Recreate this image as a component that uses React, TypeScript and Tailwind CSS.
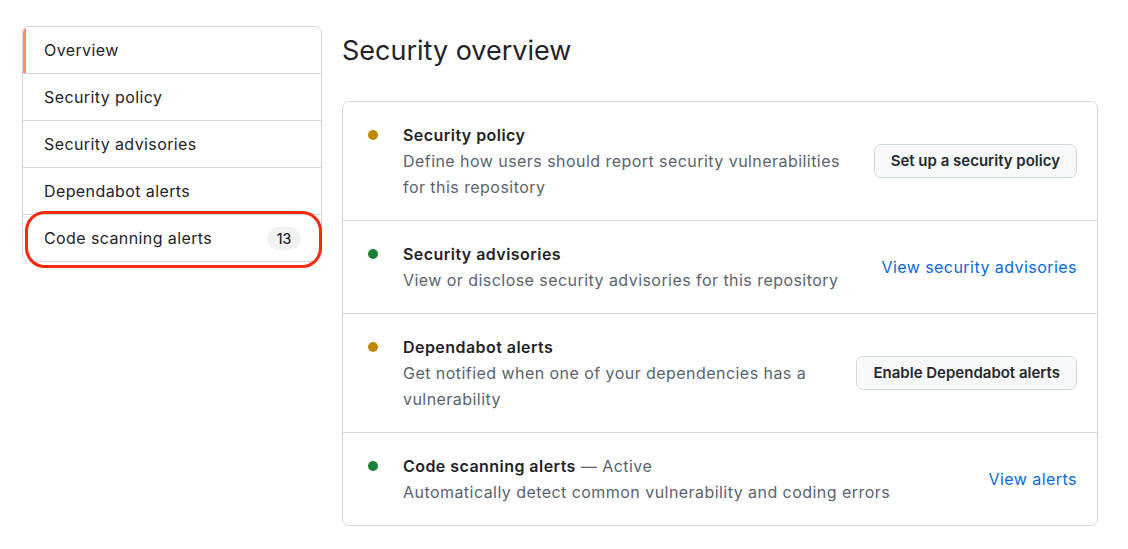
import React from 'react';

const navItems = [
  { label: 'Overview', active: true },
  { label: 'Security policy' },
  { label: 'Security advisories' },
  { label: 'Dependabot alerts' },
  { label: 'Code scanning alerts', count: 13 },
];

type Row = {
  title: string;
  suffix?: string;
  description: string;
  status: 'warn' | 'ok';
  action: { kind: 'button' | 'link'; label: string };
};

const rows: Row[] = [
  {
    title: 'Security policy',
    description: 'Define how users should report security vulnerabilities for this repository',
    status: 'warn',
    action: { kind: 'button', label: 'Set up a security policy' },
  },
  {
    title: 'Security advisories',
    description: 'View or disclose security advisories for this repository',
    status: 'ok',
    action: { kind: 'link', label: 'View security advisories' },
  },
  {
    title: 'Dependabot alerts',
    description: 'Get notified when one of your dependencies has a vulnerability',
    status: 'warn',
    action: { kind: 'button', label: 'Enable Dependabot alerts' },
  },
  {
    title: 'Code scanning alerts',
    suffix: ' — Active',
    description: 'Automatically detect common vulnerability and coding errors',
    status: 'ok',
    action: { kind: 'link', label: 'View alerts' },
  },
];

function SideNav() {
  return (
    <div className="relative w-[300px] shrink-0">
      <nav className="border border-[#d1d9e0] rounded-[7px] overflow-hidden bg-white">
        {navItems.map((item, i) => (
          <div
            key={item.label}
            className={`relative flex items-center justify-between pl-[21px] pr-[20px] text-[16px] tracking-[0.4px] text-[#1f2328] ${
              i > 0 ? 'h-[47px] border-t border-[#d1d9e0]' : 'h-[46px]'
            }`}
          >
            {item.active && <span className="absolute left-0 top-0 bottom-0 w-[3px] bg-[#fd8c73]" />}
            <span>{item.label}</span>
            {item.count !== undefined && (
              <span className="flex items-center justify-center h-[23px] min-w-[34px] px-[8px] rounded-full bg-[#eff1f3] text-[14px] tracking-normal font-medium text-[#1f2328]">
                {item.count}
              </span>
            )}
          </div>
        ))}
      </nav>
      {/* annotation ring */}
      <div className="absolute left-[3px] top-[185px] w-[297px] h-[57px] border-[3.5px] border-[#f5290c] rounded-[20px] pointer-events-none" />
    </div>
  );
}

function StatusRow({ row, first }: { row: Row; first: boolean }) {
  return (
    <div className={`flex items-center py-5 pl-[25px] pr-[20px] ${first ? '' : 'border-t border-[#d1d9e0]'}`}>
      <div className="flex items-start flex-1 min-w-0 pr-4">
        <span
          className={`mt-[8px] w-[10px] h-[10px] rounded-full shrink-0 ${
            row.status === 'warn' ? 'bg-[#bf8700]' : 'bg-[#1a7f37]'
          }`}
        />
        <div className="ml-[25px] leading-[26px] text-[16px] tracking-[0.45px]">
          <div className="text-[#1f2328]">
            <span className="font-semibold">{row.title}</span>
            {row.suffix && <span className="text-[#59636e]">{row.suffix}</span>}
          </div>
          <div className="text-[#59636e]">{row.description}</div>
        </div>
      </div>
      {row.action.kind === 'button' ? (
        <button className="shrink-0 h-[34px] px-[16px] rounded-[7px] border border-[#d1d9e0] bg-[#f6f8fa] text-[15px] font-semibold text-[#25292e]">
          {row.action.label}
        </button>
      ) : (
        <a href="#" className="shrink-0 text-[16px] tracking-[0.45px] text-[#0969da]">
          {row.action.label}
        </a>
      )}
    </div>
  );
}

export default function App() {
  return (
    <div className="min-h-screen bg-white font-['Inter',sans-serif] antialiased">
      <div className="flex gap-[20px] pl-[22px] pt-[26px]">
        <SideNav />
        <main className="w-[756px]">
          <h1 className="pt-[7px] h-[40px] text-[27px] leading-[35px] text-[#1f2328] mb-[35px]">Security overview</h1>
          <div className="border border-[#d1d9e0] rounded-[7px]">
            {rows.map((row, i) => (
              <StatusRow key={row.title} row={row} first={i === 0} />
            ))}
          </div>
        </main>
      </div>
    </div>
  );
}
